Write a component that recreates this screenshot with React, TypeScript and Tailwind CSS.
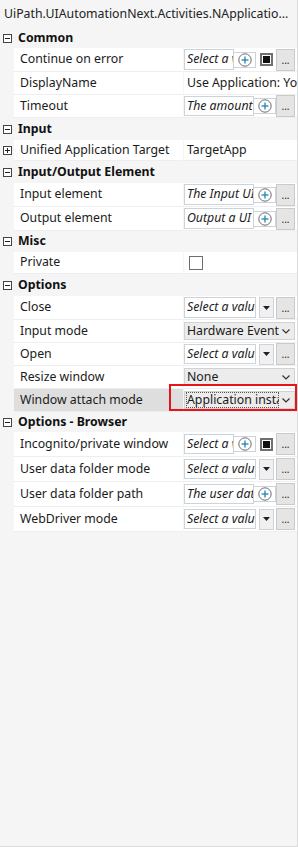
import React from "react";

type Editor =
  | { kind: "expr"; text: string; check: boolean }
  | { kind: "exprPlus"; text: string }
  | { kind: "select"; text: string }
  | { kind: "combo"; text: string; focused?: boolean }
  | { kind: "plain"; text: string }
  | { kind: "checkbox" };

type Row =
  | { type: "header"; label: string; h: string }
  | { type: "prop"; label: string; h: string; editor: Editor; expand?: boolean; selected?: boolean };

const rows: Row[] = [
  { type: "header", label: "Common", h: "h-[20px]" },
  { type: "prop", label: "Continue on error", h: "h-[24px]", editor: { kind: "expr", text: "Select a value", check: true } },
  { type: "prop", label: "DisplayName", h: "h-[23px]", editor: { kind: "plain", text: "Use Application: Your application" } },
  { type: "prop", label: "Timeout", h: "h-[23px]", editor: { kind: "exprPlus", text: "The amount of time" } },
  { type: "header", label: "Input", h: "h-[22px]" },
  { type: "prop", label: "Unified Application Target", h: "h-[21px]", expand: true, editor: { kind: "plain", text: "TargetApp" } },
  { type: "header", label: "Input/Output Element", h: "h-[22px]" },
  { type: "prop", label: "Input element", h: "h-[24px]", editor: { kind: "exprPlus", text: "The Input UI Element" } },
  { type: "prop", label: "Output element", h: "h-[24px]", editor: { kind: "exprPlus", text: "Output a UI Element" } },
  { type: "header", label: "Misc", h: "h-[21px]" },
  { type: "prop", label: "Private", h: "h-[22px]", editor: { kind: "checkbox" } },
  { type: "header", label: "Options", h: "h-[22px]" },
  { type: "prop", label: "Close", h: "h-[24px]", editor: { kind: "select", text: "Select a value" } },
  { type: "prop", label: "Input mode", h: "h-[23px]", editor: { kind: "combo", text: "Hardware Events" } },
  { type: "prop", label: "Open", h: "h-[23px]", editor: { kind: "select", text: "Select a value" } },
  { type: "prop", label: "Resize window", h: "h-[23px]", editor: { kind: "combo", text: "None" } },
  { type: "prop", label: "Window attach mode", h: "h-[23px]", selected: true, editor: { kind: "combo", text: "Application instance", focused: true } },
  { type: "header", label: "Options - Browser", h: "h-[20px]" },
  { type: "prop", label: "Incognito/private window", h: "h-[25px]", editor: { kind: "expr", text: "Select a value", check: true } },
  { type: "prop", label: "User data folder mode", h: "h-[25px]", editor: { kind: "select", text: "Select a value" } },
  { type: "prop", label: "User data folder path", h: "h-[25px]", editor: { kind: "exprPlus", text: "The user data folder" } },
  { type: "prop", label: "WebDriver mode", h: "h-[25px]", editor: { kind: "select", text: "Select a value" } },
];

function BoxIcon({ plus }: { plus?: boolean }) {
  return (
    <svg width="9" height="9" viewBox="0 0 9 9" className="shrink-0">
      <rect x="0.5" y="0.5" width="8" height="8" fill="#fff" stroke="#444" />
      <line x1="2" y1="4.5" x2="7" y2="4.5" stroke="#222" />
      {plus && <line x1="4.5" y1="2" x2="4.5" y2="7" stroke="#222" />}
    </svg>
  );
}

function PlusCircle() {
  return (
    <svg width="14" height="14" viewBox="0 0 14 14">
      <circle cx="7" cy="7" r="6.2" fill="#fff" stroke="#6b6b6b" strokeWidth="1" />
      <line x1="3.5" y1="7" x2="10.5" y2="7" stroke="#1f86b0" strokeWidth="1.3" />
      <line x1="7" y1="3.5" x2="7" y2="10.5" stroke="#1f86b0" strokeWidth="1.3" />
    </svg>
  );
}

function TextBox({ text, w }: { text: string; w: string }) {
  return (
    <div className={`${w} shrink-0 h-full border border-[#ccd4db] bg-white flex items-center pl-[2px] overflow-hidden`}>
      <span className="block w-full overflow-hidden whitespace-nowrap italic text-[#1c1c1c]">{text}</span>
    </div>
  );
}

function PlusBox({ w }: { w: string }) {
  return (
    <div className={`${w} shrink-0 h-full border border-l-0 border-[#ccd4db] bg-white flex items-center justify-center`}>
      <PlusCircle />
    </div>
  );
}

function Dots() {
  return (
    <div className="w-[19px] h-[22px] ml-auto mr-[2px] shrink-0 border border-[#cacaca] bg-[#e5e5e5] flex items-end justify-center pb-[5px] text-[10px] leading-none text-[#222]">
      ...
    </div>
  );
}

function ValueEditor({ e }: { e: Editor }) {
  if (e.kind === "plain") {
    return <div className="pl-[3px] whitespace-nowrap overflow-hidden text-[#1a1a1a]">{e.text}</div>;
  }
  if (e.kind === "checkbox") {
    return (
      <div className="pl-[5px]">
        <div className="w-[14px] h-[14px] border border-[#6e6e6e] bg-white" />
      </div>
    );
  }
  if (e.kind === "expr") {
    return (
      <div className="flex items-center h-full py-[1px]">
        <TextBox text={e.text} w="w-[50px]" />
        <PlusBox w="w-[22px]" />
        <div className="w-[13px] h-[13px] ml-[4px] border-2 border-[#707070] bg-white flex items-center justify-center">
          <div className="w-[7px] h-[7px] bg-[#111]" />
        </div>
        <Dots />
      </div>
    );
  }
  if (e.kind === "exprPlus") {
    return (
      <div className="flex items-center h-full py-[1px]">
        <TextBox text={e.text} w="w-[70px]" />
        <PlusBox w="w-[22px]" />
        <Dots />
      </div>
    );
  }
  if (e.kind === "select") {
    return (
      <div className="flex items-center h-full py-[1px]">
        <TextBox text={e.text} w="w-[72px]" />
        <div className="w-[15px] h-[21px] ml-[3px] border border-[#ccd4db] bg-[#f0f0f0] flex items-center justify-center">
          <svg width="7" height="4" viewBox="0 0 7 4">
            <path d="M0 0 H7 L3.5 4 Z" fill="#222" />
          </svg>
        </div>
        <Dots />
      </div>
    );
  }
  return (
    <div className="flex items-center h-full py-[1px] pr-[2px]">
      <div className="flex-1 h-full border border-[#cfd3d6] bg-[#ececec] flex items-center pl-[1px] pr-[4px] overflow-hidden">
        <div
          className={`flex-1 overflow-hidden whitespace-nowrap text-[#1a1a1a] pl-[1px] leading-[16px] ${
            e.focused ? "outline outline-1 outline-dotted outline-[#555] -outline-offset-1" : ""
          }`}
        >
          {e.text}
        </div>
        <svg width="8" height="5" viewBox="0 0 8 5" className="ml-[3px] shrink-0">
          <path d="M0.5 0.5 L4 4 L7.5 0.5" fill="none" stroke="#333" strokeWidth="1.2" />
        </svg>
      </div>
    </div>
  );
}

export default function App() {
  return (
    <div
      className="w-[298px] h-[847px] bg-[#f5f5f5] border-r border-b border-[#dcdcdc] text-[12.3px] text-[#1a1a1a] overflow-hidden"
      style={{ fontFamily: '"Noto Sans", "Noto Sans CJK SC", sans-serif' }}
    >
      <div className="h-[28px] flex items-center pl-[4px] whitespace-nowrap overflow-hidden text-[#222]">
        UiPath.UIAutomationNext.Activities.NApplicatio...
      </div>
      {rows.map((r, i) =>
        r.type === "header" ? (
          <div key={i} className={`${r.h} flex items-center gap-[6px] pl-[3px]`}>
            <BoxIcon />
            <span className="font-bold text-[#111]">{r.label}</span>
          </div>
        ) : (
          <div key={i} className={`${r.h} relative flex`}>
            <div className="w-[14px] shrink-0 flex items-center pl-[3px]">
              {r.expand && <BoxIcon plus />}
            </div>
            <div
              className={`w-[169px] shrink-0 flex items-center pl-[6px] border-b border-[#eeeeee] whitespace-nowrap overflow-hidden ${
                r.selected ? "bg-[#dedede]" : "bg-white"
              }`}
            >
              {r.label}
            </div>
            <div className="w-[1px] shrink-0" />
            <div className="flex-1 min-w-0 bg-white flex items-center border-b border-[#eeeeee] overflow-hidden">
              <div className="w-full">
                <ValueEditor e={r.editor} />
              </div>
            </div>
            {r.selected && (
              <div className="absolute left-[169px] top-[-5px] w-[128px] h-[27px] border-2 border-[#e8141c]" />
            )}
          </div>
        )
      )}
    </div>
  );
}
